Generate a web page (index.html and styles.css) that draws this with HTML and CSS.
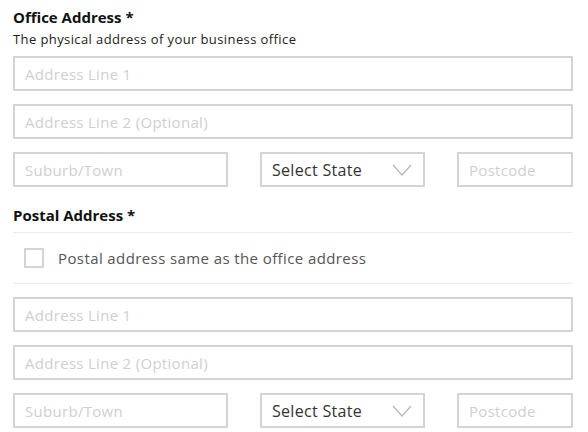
FILE: index.html
```html
<!DOCTYPE html>
<html>
<head>
<meta charset="utf-8">
<link rel="stylesheet" href="styles.css">
</head>
<body>
<form class="form">
  <h2 class="title">Office Address *</h2>
  <p class="hint">The physical address of your business office</p>
  <input class="field" type="text" placeholder="Address Line 1">
  <input class="field" type="text" placeholder="Address Line 2 (Optional)">
  <div class="row">
    <input class="field" type="text" placeholder="Suburb/Town">
    <div class="field select">
      <span class="select-text">Select State</span>
      <svg class="chev" width="20" height="12" viewBox="0 0 20 12"><path d="M1 1 L10 11 L19 1" fill="none" stroke="#b5b5b5" stroke-width="1.2"/></svg>
    </div>
    <input class="field" type="text" placeholder="Postcode">
  </div>

  <h2 class="title postal">Postal Address *</h2>
  <div class="check-row">
    <span class="box"></span>
    <span class="check-label">Postal address same as the office address</span>
  </div>
  <input class="field" type="text" placeholder="Address Line 1">
  <input class="field" type="text" placeholder="Address Line 2 (Optional)">
  <div class="row">
    <input class="field" type="text" placeholder="Suburb/Town">
    <div class="field select">
      <span class="select-text">Select State</span>
      <svg class="chev" width="20" height="12" viewBox="0 0 20 12"><path d="M1 1 L10 11 L19 1" fill="none" stroke="#b5b5b5" stroke-width="1.2"/></svg>
    </div>
    <input class="field" type="text" placeholder="Postcode">
  </div>
</form>
</body>
</html>
```
FILE: styles.css
```css
html, body {
  margin: 0;
  padding: 0;
  background: #fff;
}
body {
  font-family: "Open Sans", Lato, sans-serif;
  color: #222;
}
.form {
  width: 560px;
  margin-left: 13px;
  padding-top: 7px;
}
.title {
  margin: 0;
  font-size: 15px;
  line-height: 20px;
  font-weight: 700;
  color: #111;
}
.hint {
  margin: 3px 0 8px;
  font-size: 13px;
  line-height: 18px;
  letter-spacing: 0.4px;
  color: #222;
}
.field {
  display: block;
  box-sizing: border-box;
  width: 100%;
  height: 35px;
  margin: 0 0 13px;
  padding: 0 10px;
  border: 2px solid #d4d4d4;
  border-radius: 0;
  background: #fff;
  font-family: inherit;
  font-size: 15px;
  letter-spacing: 0.3px;
  color: #333;
  outline: none;
}
.field::placeholder {
  color: #cfcfcf;
}
.row {
  display: grid;
  grid-template-columns: 215px 165px 1fr;
  column-gap: 32px;
}
.row .field {
  margin-bottom: 0;
}
.select {
  display: flex;
  align-items: center;
  justify-content: space-between;
  padding-right: 11px;
}
.select-text {
  font-size: 16px;
  letter-spacing: 0.3px;
  color: #333;
}
.chev {
  display: block;
}
.postal {
  margin-top: 18px;
}
.check-row {
  display: flex;
  align-items: center;
  height: 50px;
  margin: 7px 0 13px;
  border-top: 1px solid #ececec;
  border-bottom: 1px solid #ececec;
  padding-left: 11px;
}
.box {
  width: 20px;
  height: 20px;
  box-sizing: border-box;
  border: 2px solid #d4d4d4;
  margin-right: 14px;
}
.check-label {
  font-size: 15px;
  letter-spacing: 0.4px;
  color: #555;
}
```
